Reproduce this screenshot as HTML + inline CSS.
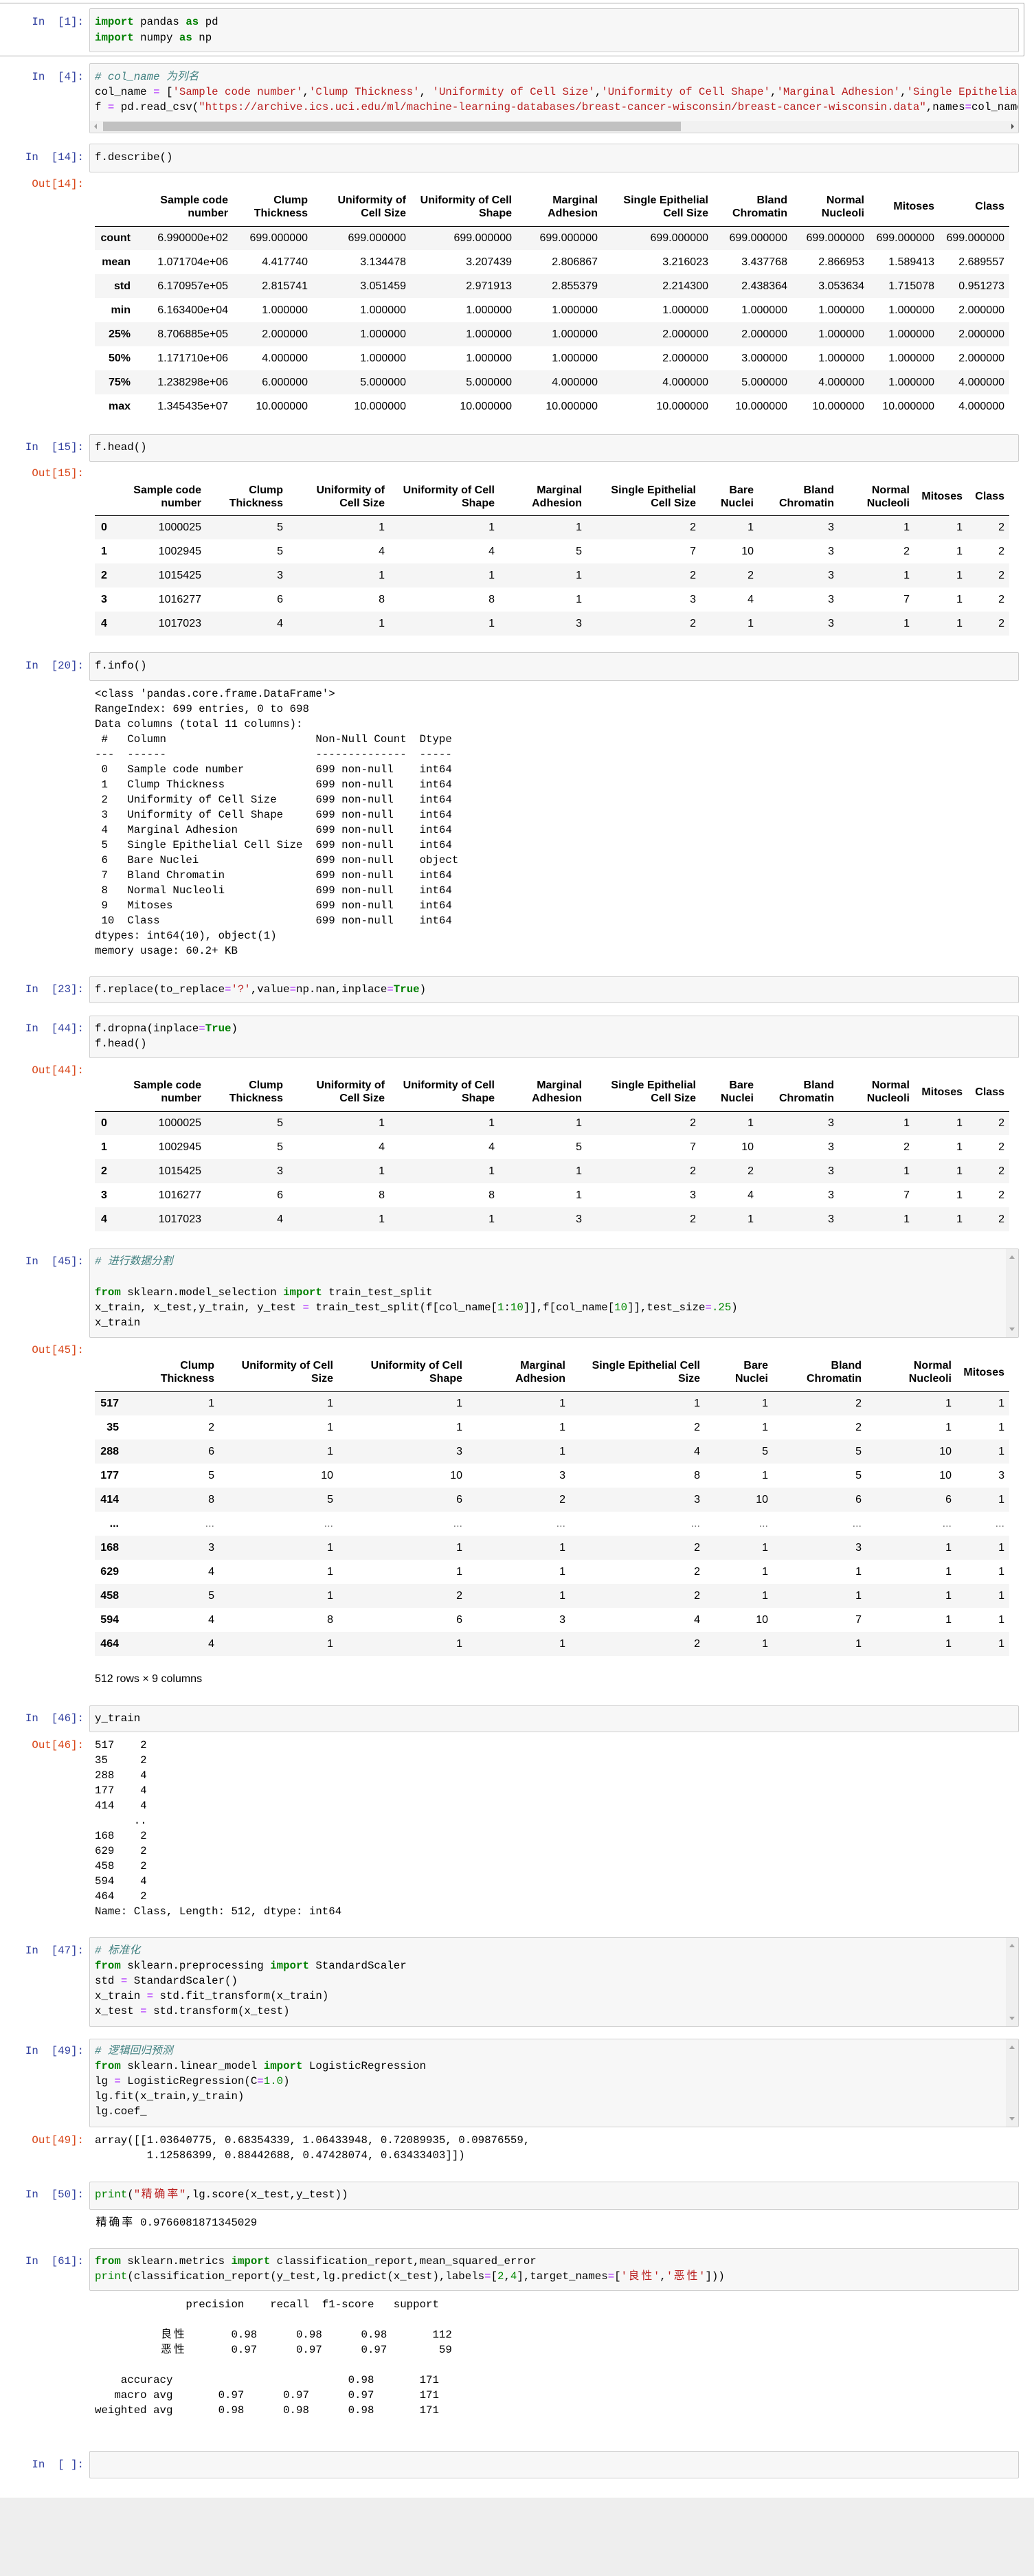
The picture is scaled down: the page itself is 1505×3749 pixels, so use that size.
<!DOCTYPE html>
<html><head><meta charset="utf-8">
<style>
html,body{margin:0;padding:0;background:#fff;}
body{width:1505px;height:3749px;position:relative;overflow:hidden;font-family:"Liberation Mono","Noto Sans CJK SC",monospace;font-size:15.75px;color:#000;}
.sel{position:absolute;left:-2px;top:4px;width:1493px;height:78px;border:1px solid #ababab;border-radius:2px;box-sizing:border-box;}
.box{position:absolute;left:130px;width:1353px;background:#f7f7f7;border:1px solid #cfcfcf;border-radius:2px;box-sizing:border-box;overflow:hidden;}
.ln{position:absolute;white-space:pre;line-height:22px;height:22px;}
.p{position:absolute;right:1383px;white-space:pre;line-height:22px;text-align:right;}
.pi{color:#303F9F;}
.po{color:#D84315;}
.k{color:#008000;font-weight:bold;}
.b{color:#008000;}
.c{color:#408080;font-style:italic;}
.s{color:#BA2121;}
.o{color:#AA22FF;}
.n{color:#008800;}
.cj{display:inline-block;width:1.2em;text-align:center;}
table{position:absolute;left:138px;border-collapse:collapse;table-layout:fixed;font-family:"Liberation Sans",Arial,sans-serif;font-size:16px;line-height:19px;}
th,td{padding:0 7px 0 0;text-align:right;white-space:nowrap;overflow:hidden;}
thead th{border-bottom:1px solid #000;vertical-align:middle;font-weight:bold;}
tbody tr{height:35px;}
tbody tr:nth-child(odd){background:#f5f5f5;}
tbody th{font-weight:bold;}
.vs{position:absolute;right:0;top:0;bottom:0;width:18px;background:#efefef;}
.vs:before{content:"";position:absolute;left:5px;top:9px;border:4px solid transparent;border-bottom:5px solid #a3a3a3;border-top:0;}
.vs:after{content:"";position:absolute;left:5px;bottom:9px;border:4px solid transparent;border-top:5px solid #a3a3a3;border-bottom:0;}
.sans{font-family:"Liberation Sans",Arial,sans-serif;font-size:16px;}
</style></head><body>

<!-- In[1] -->
<div class="sel"></div>
<div class="p pi" style="top:21px">In  [1]:</div>
<div class="box" style="top:12px;height:64px"></div>
<div class="ln" style="left:138px;top:21px"><span class="k">import</span> pandas <span class="k">as</span> pd</div>
<div class="ln" style="left:138px;top:44px"><span class="k">import</span> numpy <span class="k">as</span> np</div>

<!-- In[4] -->
<div class="p pi" style="top:101px">In  [4]:</div>
<div class="box" style="top:92px;height:102px">
 <div class="ln" style="left:7px;top:8px"><span class="c"># col_name 为列名</span></div>
 <div class="ln" style="left:7px;top:30px">col_name <span class="o">=</span> [<span class="s">'Sample code number'</span>,<span class="s">'Clump Thickness'</span>, <span class="s">'Uniformity of Cell Size'</span>,<span class="s">'Uniformity of Cell Shape'</span>,<span class="s">'Marginal Adhesion'</span>,<span class="s">'Single Epithelial Cell Size'</span>,<span class="s">'Bare Nuclei'</span>]</div>
 <div class="ln" style="left:7px;top:52px">f <span class="o">=</span> pd.read_csv(<span class="s">"https://archive.ics.uci.edu/ml/machine-learning-databases/breast-cancer-wisconsin/breast-cancer-wisconsin.data"</span>,names<span class="o">=</span>col_names)</div>
 <div style="position:absolute;left:0;right:0;top:83px;height:17px;background:#f1f1f1"></div>
 <div style="position:absolute;left:19px;width:841px;top:84px;height:14px;background:#c1c1c1"></div>
 <div style="position:absolute;left:6px;top:87px;border:4px solid transparent;border-right:4px solid #a3a3a3;border-left:0"></div>
 <div style="position:absolute;right:6px;top:87px;border:4px solid transparent;border-left:4px solid #505050;border-right:0"></div>
</div>

<!-- In[14] -->
<div class="p pi" style="top:218px">In  [14]:</div>
<div class="box" style="top:209px;height:42px"></div>
<div class="ln" style="left:138px;top:218px">f.describe()</div>
<div class="p po" style="top:257px">Out[14]:</div>
<table style="top:273px;width:1331px">
<colgroup><col style="width:59px"><col style="width:142px"><col style="width:116px"><col style="width:143px"><col style="width:154px"><col style="width:125px"><col style="width:161px"><col style="width:115px"><col style="width:112px"><col style="width:102px"><col style="width:102px"></colgroup>
<thead><tr style="height:56px"><th></th><th>Sample code<br>number</th><th>Clump<br>Thickness</th><th>Uniformity of<br>Cell Size</th><th>Uniformity of Cell<br>Shape</th><th>Marginal<br>Adhesion</th><th>Single Epithelial<br>Cell Size</th><th>Bland<br>Chromatin</th><th>Normal<br>Nucleoli</th><th>Mitoses</th><th>Class</th></tr></thead>
<tbody>
<tr><th>count</th><td>6.990000e+02</td><td>699.000000</td><td>699.000000</td><td>699.000000</td><td>699.000000</td><td>699.000000</td><td>699.000000</td><td>699.000000</td><td>699.000000</td><td>699.000000</td></tr>
<tr><th>mean</th><td>1.071704e+06</td><td>4.417740</td><td>3.134478</td><td>3.207439</td><td>2.806867</td><td>3.216023</td><td>3.437768</td><td>2.866953</td><td>1.589413</td><td>2.689557</td></tr>
<tr><th>std</th><td>6.170957e+05</td><td>2.815741</td><td>3.051459</td><td>2.971913</td><td>2.855379</td><td>2.214300</td><td>2.438364</td><td>3.053634</td><td>1.715078</td><td>0.951273</td></tr>
<tr><th>min</th><td>6.163400e+04</td><td>1.000000</td><td>1.000000</td><td>1.000000</td><td>1.000000</td><td>1.000000</td><td>1.000000</td><td>1.000000</td><td>1.000000</td><td>2.000000</td></tr>
<tr><th>25%</th><td>8.706885e+05</td><td>2.000000</td><td>1.000000</td><td>1.000000</td><td>1.000000</td><td>2.000000</td><td>2.000000</td><td>1.000000</td><td>1.000000</td><td>2.000000</td></tr>
<tr><th>50%</th><td>1.171710e+06</td><td>4.000000</td><td>1.000000</td><td>1.000000</td><td>1.000000</td><td>2.000000</td><td>3.000000</td><td>1.000000</td><td>1.000000</td><td>2.000000</td></tr>
<tr><th>75%</th><td>1.238298e+06</td><td>6.000000</td><td>5.000000</td><td>5.000000</td><td>4.000000</td><td>4.000000</td><td>5.000000</td><td>4.000000</td><td>1.000000</td><td>4.000000</td></tr>
<tr><th>max</th><td>1.345435e+07</td><td>10.000000</td><td>10.000000</td><td>10.000000</td><td>10.000000</td><td>10.000000</td><td>10.000000</td><td>10.000000</td><td>10.000000</td><td>4.000000</td></tr>
</tbody></table>

<!-- In[15] -->
<div class="p pi" style="top:640px">In  [15]:</div>
<div class="box" style="top:632px;height:40px"></div>
<div class="ln" style="left:138px;top:640px">f.head()</div>
<div class="p po" style="top:678px">Out[15]:</div>
<table style="top:696px;width:1331px">
<colgroup><col style="width:42px"><col style="width:120px"><col style="width:119px"><col style="width:148px"><col style="width:160px"><col style="width:127px"><col style="width:166px"><col style="width:84px"><col style="width:117px"><col style="width:110px"><col style="width:77px"><col style="width:61px"></colgroup>
<thead><tr style="height:54px"><th></th><th>Sample code<br>number</th><th>Clump<br>Thickness</th><th>Uniformity of<br>Cell Size</th><th>Uniformity of Cell<br>Shape</th><th>Marginal<br>Adhesion</th><th>Single Epithelial<br>Cell Size</th><th>Bare<br>Nuclei</th><th>Bland<br>Chromatin</th><th>Normal<br>Nucleoli</th><th>Mitoses</th><th>Class</th></tr></thead>
<tbody>
<tr><th style="text-align:left;padding-left:9px">0</th><td>1000025</td><td>5</td><td>1</td><td>1</td><td>1</td><td>2</td><td>1</td><td>3</td><td>1</td><td>1</td><td>2</td></tr>
<tr><th style="text-align:left;padding-left:9px">1</th><td>1002945</td><td>5</td><td>4</td><td>4</td><td>5</td><td>7</td><td>10</td><td>3</td><td>2</td><td>1</td><td>2</td></tr>
<tr><th style="text-align:left;padding-left:9px">2</th><td>1015425</td><td>3</td><td>1</td><td>1</td><td>1</td><td>2</td><td>2</td><td>3</td><td>1</td><td>1</td><td>2</td></tr>
<tr><th style="text-align:left;padding-left:9px">3</th><td>1016277</td><td>6</td><td>8</td><td>8</td><td>1</td><td>3</td><td>4</td><td>3</td><td>7</td><td>1</td><td>2</td></tr>
<tr><th style="text-align:left;padding-left:9px">4</th><td>1017023</td><td>4</td><td>1</td><td>1</td><td>3</td><td>2</td><td>1</td><td>3</td><td>1</td><td>1</td><td>2</td></tr>
</tbody></table>

<!-- In[20] -->
<div class="p pi" style="top:958px">In  [20]:</div>
<div class="box" style="top:949px;height:42px"></div>
<div class="ln" style="left:138px;top:958px">f.info()</div>
<div class="ln" style="left:138px;top:999px">&lt;class 'pandas.core.frame.DataFrame'&gt;
RangeIndex: 699 entries, 0 to 698
Data columns (total 11 columns):
 #   Column                       Non-Null Count  Dtype 
---  ------                       --------------  ----- 
 0   Sample code number           699 non-null    int64 
 1   Clump Thickness              699 non-null    int64 
 2   Uniformity of Cell Size      699 non-null    int64 
 3   Uniformity of Cell Shape     699 non-null    int64 
 4   Marginal Adhesion            699 non-null    int64 
 5   Single Epithelial Cell Size  699 non-null    int64 
 6   Bare Nuclei                  699 non-null    object
 7   Bland Chromatin              699 non-null    int64 
 8   Normal Nucleoli              699 non-null    int64 
 9   Mitoses                      699 non-null    int64 
 10  Class                        699 non-null    int64 
dtypes: int64(10), object(1)
memory usage: 60.2+ KB</div>

<!-- In[23] -->
<div class="p pi" style="top:1429px">In  [23]:</div>
<div class="box" style="top:1421px;height:39px"></div>
<div class="ln" style="left:138px;top:1429px">f.replace(to_replace<span class="o">=</span><span class="s">'?'</span>,value<span class="o">=</span>np.nan,inplace<span class="o">=</span><span class="k">True</span>)</div>

<!-- In[44] -->
<div class="p pi" style="top:1486px">In  [44]:</div>
<div class="box" style="top:1478px;height:62px"></div>
<div class="ln" style="left:138px;top:1486px">f.dropna(inplace<span class="o">=</span><span class="k">True</span>)</div>
<div class="ln" style="left:138px;top:1508px">f.head()</div>
<div class="p po" style="top:1547px">Out[44]:</div>
<table style="top:1562px;width:1331px">
<colgroup><col style="width:42px"><col style="width:120px"><col style="width:119px"><col style="width:148px"><col style="width:160px"><col style="width:127px"><col style="width:166px"><col style="width:84px"><col style="width:117px"><col style="width:110px"><col style="width:77px"><col style="width:61px"></colgroup>
<thead><tr style="height:55px"><th></th><th>Sample code<br>number</th><th>Clump<br>Thickness</th><th>Uniformity of<br>Cell Size</th><th>Uniformity of Cell<br>Shape</th><th>Marginal<br>Adhesion</th><th>Single Epithelial<br>Cell Size</th><th>Bare<br>Nuclei</th><th>Bland<br>Chromatin</th><th>Normal<br>Nucleoli</th><th>Mitoses</th><th>Class</th></tr></thead>
<tbody>
<tr><th style="text-align:left;padding-left:9px">0</th><td>1000025</td><td>5</td><td>1</td><td>1</td><td>1</td><td>2</td><td>1</td><td>3</td><td>1</td><td>1</td><td>2</td></tr>
<tr><th style="text-align:left;padding-left:9px">1</th><td>1002945</td><td>5</td><td>4</td><td>4</td><td>5</td><td>7</td><td>10</td><td>3</td><td>2</td><td>1</td><td>2</td></tr>
<tr><th style="text-align:left;padding-left:9px">2</th><td>1015425</td><td>3</td><td>1</td><td>1</td><td>1</td><td>2</td><td>2</td><td>3</td><td>1</td><td>1</td><td>2</td></tr>
<tr><th style="text-align:left;padding-left:9px">3</th><td>1016277</td><td>6</td><td>8</td><td>8</td><td>1</td><td>3</td><td>4</td><td>3</td><td>7</td><td>1</td><td>2</td></tr>
<tr><th style="text-align:left;padding-left:9px">4</th><td>1017023</td><td>4</td><td>1</td><td>1</td><td>3</td><td>2</td><td>1</td><td>3</td><td>1</td><td>1</td><td>2</td></tr>
</tbody></table>

<!-- In[45] -->
<div class="p pi" style="top:1825px">In  [45]:</div>
<div class="box" style="top:1817px;height:130px"><div class="vs"></div></div>
<div class="ln" style="left:138px;top:1825px"><span class="c"># 进行数据分割</span></div>
<div class="ln" style="left:138px;top:1870px"><span class="k">from</span> sklearn.model_selection <span class="k">import</span> train_test_split</div>
<div class="ln" style="left:138px;top:1892px">x_train, x_test,y_train, y_test <span class="o">=</span> train_test_split(f[col_name[<span class="n">1</span>:<span class="n">10</span>]],f[col_name[<span class="n">10</span>]],test_size<span class="o">=</span><span class="n">.25</span>)</div>
<div class="ln" style="left:138px;top:1914px">x_train</div>
<div class="p po" style="top:1954px">Out[45]:</div>
<table style="top:1970px;width:1331px">
<colgroup><col style="width:42px"><col style="width:139px"><col style="width:173px"><col style="width:188px"><col style="width:150px"><col style="width:196px"><col style="width:99px"><col style="width:136px"><col style="width:131px"><col style="width:77px"></colgroup>
<thead><tr style="height:55px"><th></th><th>Clump<br>Thickness</th><th>Uniformity of Cell<br>Size</th><th>Uniformity of Cell<br>Shape</th><th>Marginal<br>Adhesion</th><th>Single Epithelial Cell<br>Size</th><th>Bare<br>Nuclei</th><th>Bland<br>Chromatin</th><th>Normal<br>Nucleoli</th><th>Mitoses</th></tr></thead>
<tbody>
<tr><th>517</th><td>1</td><td>1</td><td>1</td><td>1</td><td>1</td><td>1</td><td>2</td><td>1</td><td>1</td></tr>
<tr><th>35</th><td>2</td><td>1</td><td>1</td><td>1</td><td>2</td><td>1</td><td>2</td><td>1</td><td>1</td></tr>
<tr><th>288</th><td>6</td><td>1</td><td>3</td><td>1</td><td>4</td><td>5</td><td>5</td><td>10</td><td>1</td></tr>
<tr><th>177</th><td>5</td><td>10</td><td>10</td><td>3</td><td>8</td><td>1</td><td>5</td><td>10</td><td>3</td></tr>
<tr><th>414</th><td>8</td><td>5</td><td>6</td><td>2</td><td>3</td><td>10</td><td>6</td><td>6</td><td>1</td></tr>
<tr style="background:#fff;color:#777"><th style="color:#000">...</th><td>...</td><td>...</td><td>...</td><td>...</td><td>...</td><td>...</td><td>...</td><td>...</td><td>...</td></tr>
<tr><th>168</th><td>3</td><td>1</td><td>1</td><td>1</td><td>2</td><td>1</td><td>3</td><td>1</td><td>1</td></tr>
<tr><th>629</th><td>4</td><td>1</td><td>1</td><td>1</td><td>2</td><td>1</td><td>1</td><td>1</td><td>1</td></tr>
<tr><th>458</th><td>5</td><td>1</td><td>2</td><td>1</td><td>2</td><td>1</td><td>1</td><td>1</td><td>1</td></tr>
<tr><th>594</th><td>4</td><td>8</td><td>6</td><td>3</td><td>4</td><td>10</td><td>7</td><td>1</td><td>1</td></tr>
<tr><th>464</th><td>4</td><td>1</td><td>1</td><td>1</td><td>2</td><td>1</td><td>1</td><td>1</td><td>1</td></tr>
</tbody></table>
<div class="ln sans" style="left:138px;top:2433px">512 rows × 9 columns</div>

<!-- In[46] -->
<div class="p pi" style="top:2490px">In  [46]:</div>
<div class="box" style="top:2482px;height:39px"></div>
<div class="ln" style="left:138px;top:2490px">y_train</div>
<div class="p po" style="top:2529px">Out[46]:</div>
<div class="ln" style="left:138px;top:2529px">517    2
35     2
288    4
177    4
414    4
      ..
168    2
629    2
458    2
594    4
464    2
Name: Class, Length: 512, dtype: int64</div>

<!-- In[47] -->
<div class="p pi" style="top:2828px">In  [47]:</div>
<div class="box" style="top:2819px;height:131px"><div class="vs"></div></div>
<div class="ln" style="left:138px;top:2828px"><span class="c"># 标准化</span>
<span class="k">from</span> sklearn.preprocessing <span class="k">import</span> StandardScaler
std <span class="o">=</span> StandardScaler()
x_train <span class="o">=</span> std.fit_transform(x_train)
x_test <span class="o">=</span> std.transform(x_test)</div>

<!-- In[49] -->
<div class="p pi" style="top:2974px">In  [49]:</div>
<div class="box" style="top:2967px;height:129px"><div class="vs"></div></div>
<div class="ln" style="left:138px;top:2974px"><span class="c"># 逻辑回归预测</span>
<span class="k">from</span> sklearn.linear_model <span class="k">import</span> LogisticRegression
lg <span class="o">=</span> LogisticRegression(C<span class="o">=</span><span class="n">1.0</span>)
lg.fit(x_train,y_train)
lg.coef_</div>
<div class="p po" style="top:3104px">Out[49]:</div>
<div class="ln" style="left:138px;top:3104px">array([[1.03640775, 0.68354339, 1.06433948, 0.72089935, 0.09876559,
        1.12586399, 0.88442688, 0.47428074, 0.63433403]])</div>

<!-- In[50] -->
<div class="p pi" style="top:3183px">In  [50]:</div>
<div class="box" style="top:3175px;height:41px"></div>
<div class="ln" style="left:138px;top:3183px"><span class="b">print</span>(<span class="s">"<span class="cj">精</span><span class="cj">确</span><span class="cj">率</span>"</span>,lg.score(x_test,y_test))</div>
<div class="ln" style="left:138px;top:3224px"><span class="cj">精</span><span class="cj">确</span><span class="cj">率</span> 0.9766081871345029</div>

<!-- In[61] -->
<div class="p pi" style="top:3280px">In  [61]:</div>
<div class="box" style="top:3272px;height:62px"></div>
<div class="ln" style="left:138px;top:3280px"><span class="k">from</span> sklearn.metrics <span class="k">import</span> classification_report,mean_squared_error</div>
<div class="ln" style="left:138px;top:3302px"><span class="b">print</span>(classification_report(y_test,lg.predict(x_test),labels<span class="o">=</span>[<span class="n">2</span>,<span class="n">4</span>],target_names<span class="o">=</span>[<span class="s">'<span class="cj">良</span><span class="cj">性</span>'</span>,<span class="s">'<span class="cj">恶</span><span class="cj">性</span>'</span>]))</div>
<div class="ln" style="left:138px;top:3343px">              precision    recall  f1-score   support

          <span class="cj">良</span><span class="cj">性</span>       0.98      0.98      0.98       112
          <span class="cj">恶</span><span class="cj">性</span>       0.97      0.97      0.97        59

    accuracy                           0.98       171
   macro avg       0.97      0.97      0.97       171
weighted avg       0.98      0.98      0.98       171</div>

<!-- In[ ] -->
<div class="p pi" style="top:3576px">In  [ ]:</div>
<div class="box" style="top:3567px;height:40px"></div>

<div style="position:absolute;left:0;top:3635px;width:1505px;height:114px;background:#eeeeee"></div>
</body></html>
